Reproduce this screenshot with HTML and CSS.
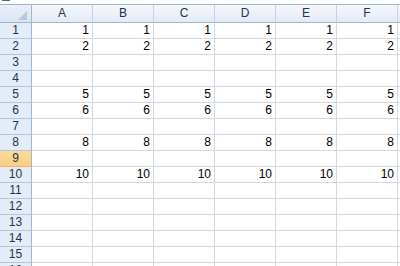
FILE: index.html
```html
<!DOCTYPE html>
<html lang="en">
<head>
    <meta charset="UTF-8">
    <title>Sheet1</title>
    <link rel="stylesheet" href="styles.css">
</head>
<body>
    <!-- bottom edge of the formula bar -->
    <div class="formula-edge"><span class="name-box"></span></div>

    <div class="sheet">
        <div class="row head-row">
            <div class="corner"><span class="corner-mark"></span></div>
            <div class="col-head">A</div>
            <div class="col-head">B</div>
            <div class="col-head">C</div>
            <div class="col-head">D</div>
            <div class="col-head">E</div>
            <div class="col-head">F</div>
            <div class="col-head"></div>
        </div>
        <div class="row"><div class="row-head">1</div><div class="cell">1</div><div class="cell">1</div><div class="cell">1</div><div class="cell">1</div><div class="cell">1</div><div class="cell">1</div><div class="cell"></div></div>
        <div class="row"><div class="row-head">2</div><div class="cell">2</div><div class="cell">2</div><div class="cell">2</div><div class="cell">2</div><div class="cell">2</div><div class="cell">2</div><div class="cell"></div></div>
        <div class="row"><div class="row-head">3</div><div class="cell"></div><div class="cell"></div><div class="cell"></div><div class="cell"></div><div class="cell"></div><div class="cell"></div><div class="cell"></div></div>
        <div class="row"><div class="row-head">4</div><div class="cell"></div><div class="cell"></div><div class="cell"></div><div class="cell"></div><div class="cell"></div><div class="cell"></div><div class="cell"></div></div>
        <div class="row"><div class="row-head">5</div><div class="cell">5</div><div class="cell">5</div><div class="cell">5</div><div class="cell">5</div><div class="cell">5</div><div class="cell">5</div><div class="cell"></div></div>
        <div class="row"><div class="row-head">6</div><div class="cell">6</div><div class="cell">6</div><div class="cell">6</div><div class="cell">6</div><div class="cell">6</div><div class="cell">6</div><div class="cell"></div></div>
        <div class="row"><div class="row-head">7</div><div class="cell"></div><div class="cell"></div><div class="cell"></div><div class="cell"></div><div class="cell"></div><div class="cell"></div><div class="cell"></div></div>
        <div class="row"><div class="row-head">8</div><div class="cell">8</div><div class="cell">8</div><div class="cell">8</div><div class="cell">8</div><div class="cell">8</div><div class="cell">8</div><div class="cell"></div></div>
        <div class="row"><div class="row-head selected">9</div><div class="cell"></div><div class="cell"></div><div class="cell"></div><div class="cell"></div><div class="cell"></div><div class="cell"></div><div class="cell"></div></div>
        <div class="row"><div class="row-head">10</div><div class="cell">10</div><div class="cell">10</div><div class="cell">10</div><div class="cell">10</div><div class="cell">10</div><div class="cell">10</div><div class="cell"></div></div>
        <div class="row"><div class="row-head">11</div><div class="cell"></div><div class="cell"></div><div class="cell"></div><div class="cell"></div><div class="cell"></div><div class="cell"></div><div class="cell"></div></div>
        <div class="row"><div class="row-head">12</div><div class="cell"></div><div class="cell"></div><div class="cell"></div><div class="cell"></div><div class="cell"></div><div class="cell"></div><div class="cell"></div></div>
        <div class="row"><div class="row-head">13</div><div class="cell"></div><div class="cell"></div><div class="cell"></div><div class="cell"></div><div class="cell"></div><div class="cell"></div><div class="cell"></div></div>
        <div class="row"><div class="row-head">14</div><div class="cell"></div><div class="cell"></div><div class="cell"></div><div class="cell"></div><div class="cell"></div><div class="cell"></div><div class="cell"></div></div>
        <div class="row"><div class="row-head">15</div><div class="cell"></div><div class="cell"></div><div class="cell"></div><div class="cell"></div><div class="cell"></div><div class="cell"></div><div class="cell"></div></div>
        <div class="row"><div class="row-head">16</div><div class="cell"></div><div class="cell"></div><div class="cell"></div><div class="cell"></div><div class="cell"></div><div class="cell"></div><div class="cell"></div></div>
    </div>
</body>
</html>
```

FILE: styles.css
```css
body {
    margin: 0;
    background-color: #fff;
    font-family: "Liberation Sans", Arial, sans-serif;
    font-size: 12px;
    color: #000;
    overflow: hidden;
}
.formula-edge {
    height: 4px;
    background-color: #fff;
}
.name-box {
    display: block;
    margin-left: 2px;
    width: 8px;
    height: 1px;
    background-color: #5a6272;
}
.sheet {
    width: 460px;
}
.row {
    display: grid;
    grid-template-columns: 32px repeat(7, 61px);
    height: 16px;
}
.head-row {
    height: 18px;
    border-top: 1px solid #9eb6ce;
}
.corner {
    position: relative;
    background: linear-gradient(#e9eff8, #dbe5f2);
    border-right: 1px solid #9eb6ce;
    border-bottom: 1px solid #9eb6ce;
}
.corner-mark {
    position: absolute;
    right: 4px;
    bottom: 2px;
    width: 0;
    height: 0;
    border-left: 9px solid transparent;
    border-bottom: 9px solid #b7c9de;
}
.col-head {
    background: linear-gradient(#f5f8fc, #e4ebf5);
    border-right: 1px solid #c6d3e3;
    border-bottom: 1px solid #9eb6ce;
    text-align: center;
    line-height: 16px;
    color: #253447;
}
.row-head {
    background-color: #e4ecf7;
    border-right: 1px solid #9eb6ce;
    border-bottom: 1px solid #b4c6dc;
    text-align: center;
    line-height: 15px;
    color: #253447;
}
.row-head.selected {
    background: linear-gradient(#fbdb9c, #f8cf84);
    border-bottom-color: #f2b55e;
}
.cell {
    border-right: 1px solid #d4d8df;
    border-bottom: 1px solid #d4d8df;
    text-align: right;
    padding-right: 3px;
    line-height: 15px;
}
```
